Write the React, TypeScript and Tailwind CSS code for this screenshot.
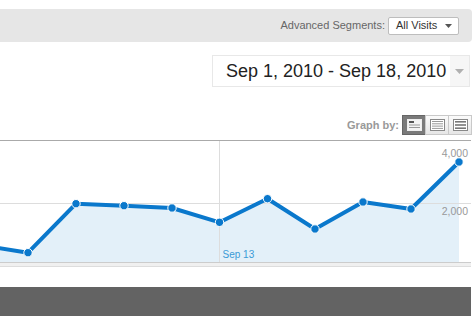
import React from "react";

type Pt = [number, number];

const points: Pt[] = [
  [-20, 105],
  [28, 112.7],
  [76, 63.7],
  [124, 65.7],
  [172, 68],
  [219.5, 82.3],
  [267.5, 58.7],
  [315, 89],
  [363, 62],
  [411, 69],
  [459, 22],
];

function GraphButton({ active, heavy }: { active?: boolean; heavy?: boolean }) {
  return (
    <div
      className={`w-[24px] h-[20px] flex items-center justify-center border ${
        active ? "bg-[#7a7a7a] border-[#666]" : "bg-gradient-to-b from-[#fbfbfb] to-[#e6e6e6] border-[#c9c9c9] -ml-px"
      }`}
    >
      <svg width="15" height="12" viewBox="0 0 15 12">
        <rect x="0.5" y="0.5" width="14" height="11" fill={active ? "#f4f4f4" : "#fff"} stroke={active ? "#eee" : "#888"} />
        {active ? (
          <>
            <rect x="2" y="2" width="5" height="2" fill="#555" />
            <rect x="2" y="5.5" width="11" height="1" fill="#999" />
            <rect x="2" y="8" width="11" height="1" fill="#999" />
          </>
        ) : heavy ? (
          <>
            <rect x="2" y="2" width="11" height="1.6" fill="#777" />
            <rect x="2" y="5.2" width="11" height="1.6" fill="#777" />
            <rect x="2" y="8.4" width="11" height="1.6" fill="#777" />
          </>
        ) : (
          <>
            <rect x="2" y="2" width="11" height="1" fill="#999" />
            <rect x="2" y="4.3" width="11" height="1" fill="#999" />
            <rect x="2" y="6.6" width="11" height="1" fill="#999" />
            <rect x="2" y="8.9" width="11" height="1" fill="#999" />
          </>
        )}
      </svg>
    </div>
  );
}

function Chart() {
  const line = points.map((p) => p.join(",")).join(" ");
  const fill = `${line} 459,122 -20,122`;
  return (
    <svg width="471" height="127" viewBox="0 0 471 127" className="block">
      <polygon points={fill} fill="#e3f0f9" />
      <line x1="0" y1="0.5" x2="471" y2="0.5" stroke="#aaa" />
      <line x1="0" y1="63.5" x2="471" y2="63.5" stroke="#ddd" />
      <line x1="219.5" y1="1" x2="219.5" y2="122" stroke="#ddd" />
      <rect x="0" y="122" width="471" height="4" fill="#f0f0f0" />
      <line x1="0" y1="122.5" x2="471" y2="122.5" stroke="#ccc" />
      <line x1="0" y1="126.5" x2="471" y2="126.5" stroke="#ddd" />
      <polyline points={line} fill="none" stroke="#0a78cc" strokeWidth="4" strokeLinejoin="round" />
      {points.slice(1).map(([x, y]) => (
        <circle key={x} cx={x} cy={y} r="4.2" fill="#0a78cc" stroke="#fff" strokeWidth="1" />
      ))}
      <text x="468" y="16.5" textAnchor="end" fontSize="10.5" fill="#999" fontFamily="Liberation Sans, Arial, sans-serif">
        4,000
      </text>
      <text x="468" y="74.5" textAnchor="end" fontSize="10.5" fill="#999" fontFamily="Liberation Sans, Arial, sans-serif">
        2,000
      </text>
      <text x="222.5" y="117.5" fontSize="10" fill="#3b9ad6" fontFamily="Liberation Sans, Arial, sans-serif">
        Sep 13
      </text>
    </svg>
  );
}

export default function App() {
  return (
    <div className="w-[475px] h-[316px] bg-white overflow-hidden flex flex-col font-['Liberation_Sans',Arial,sans-serif]">
      <div className="mt-[9px] h-[33px] w-[472px] bg-[#e6e6e6] rounded-r-[4px] flex items-center justify-end pr-[13px]">
        <span className="text-[11px] text-[#666] mr-[3px]">Advanced Segments:</span>
        <div className="w-[71px] h-[18px] border border-[#bdbdbd] bg-white rounded-[2px] flex items-center justify-between pl-[7px] pr-[6px]">
          <span className="text-[11px] text-[#333] leading-none">All Visits</span>
          <svg width="7" height="4" viewBox="0 0 7 4">
            <polygon points="0,0 7,0 3.5,4" fill="#555" />
          </svg>
        </div>
      </div>

      <div className="mt-[13px] flex justify-end pr-[5px]">
        <div className="w-[258px] h-[32px] border border-[#e8e8e8] flex">
          <div className="flex-1 flex items-center pl-[13px] text-[18px] text-[#222]">Sep 1, 2010 - Sep 18, 2010</div>
          <div className="w-[19px] bg-[#f6f6f6] flex items-center justify-center">
            <svg width="9" height="5" viewBox="0 0 9 5">
              <polygon points="0,0 9,0 4.5,5" fill="#b0b0b0" />
            </svg>
          </div>
        </div>
      </div>

      <div className="mt-[28px] h-[20px] flex items-center justify-end pr-[3px]">
        <span className="text-[11px] font-bold text-[#999] mr-[3px]">Graph by:</span>
        <GraphButton active />
        <GraphButton />
        <GraphButton heavy />
      </div>

      <div className="mt-[5px]">
        <Chart />
      </div>

      <div className="mt-[20px] h-[29px] w-[471px] bg-[#636363]" />
    </div>
  );
}
